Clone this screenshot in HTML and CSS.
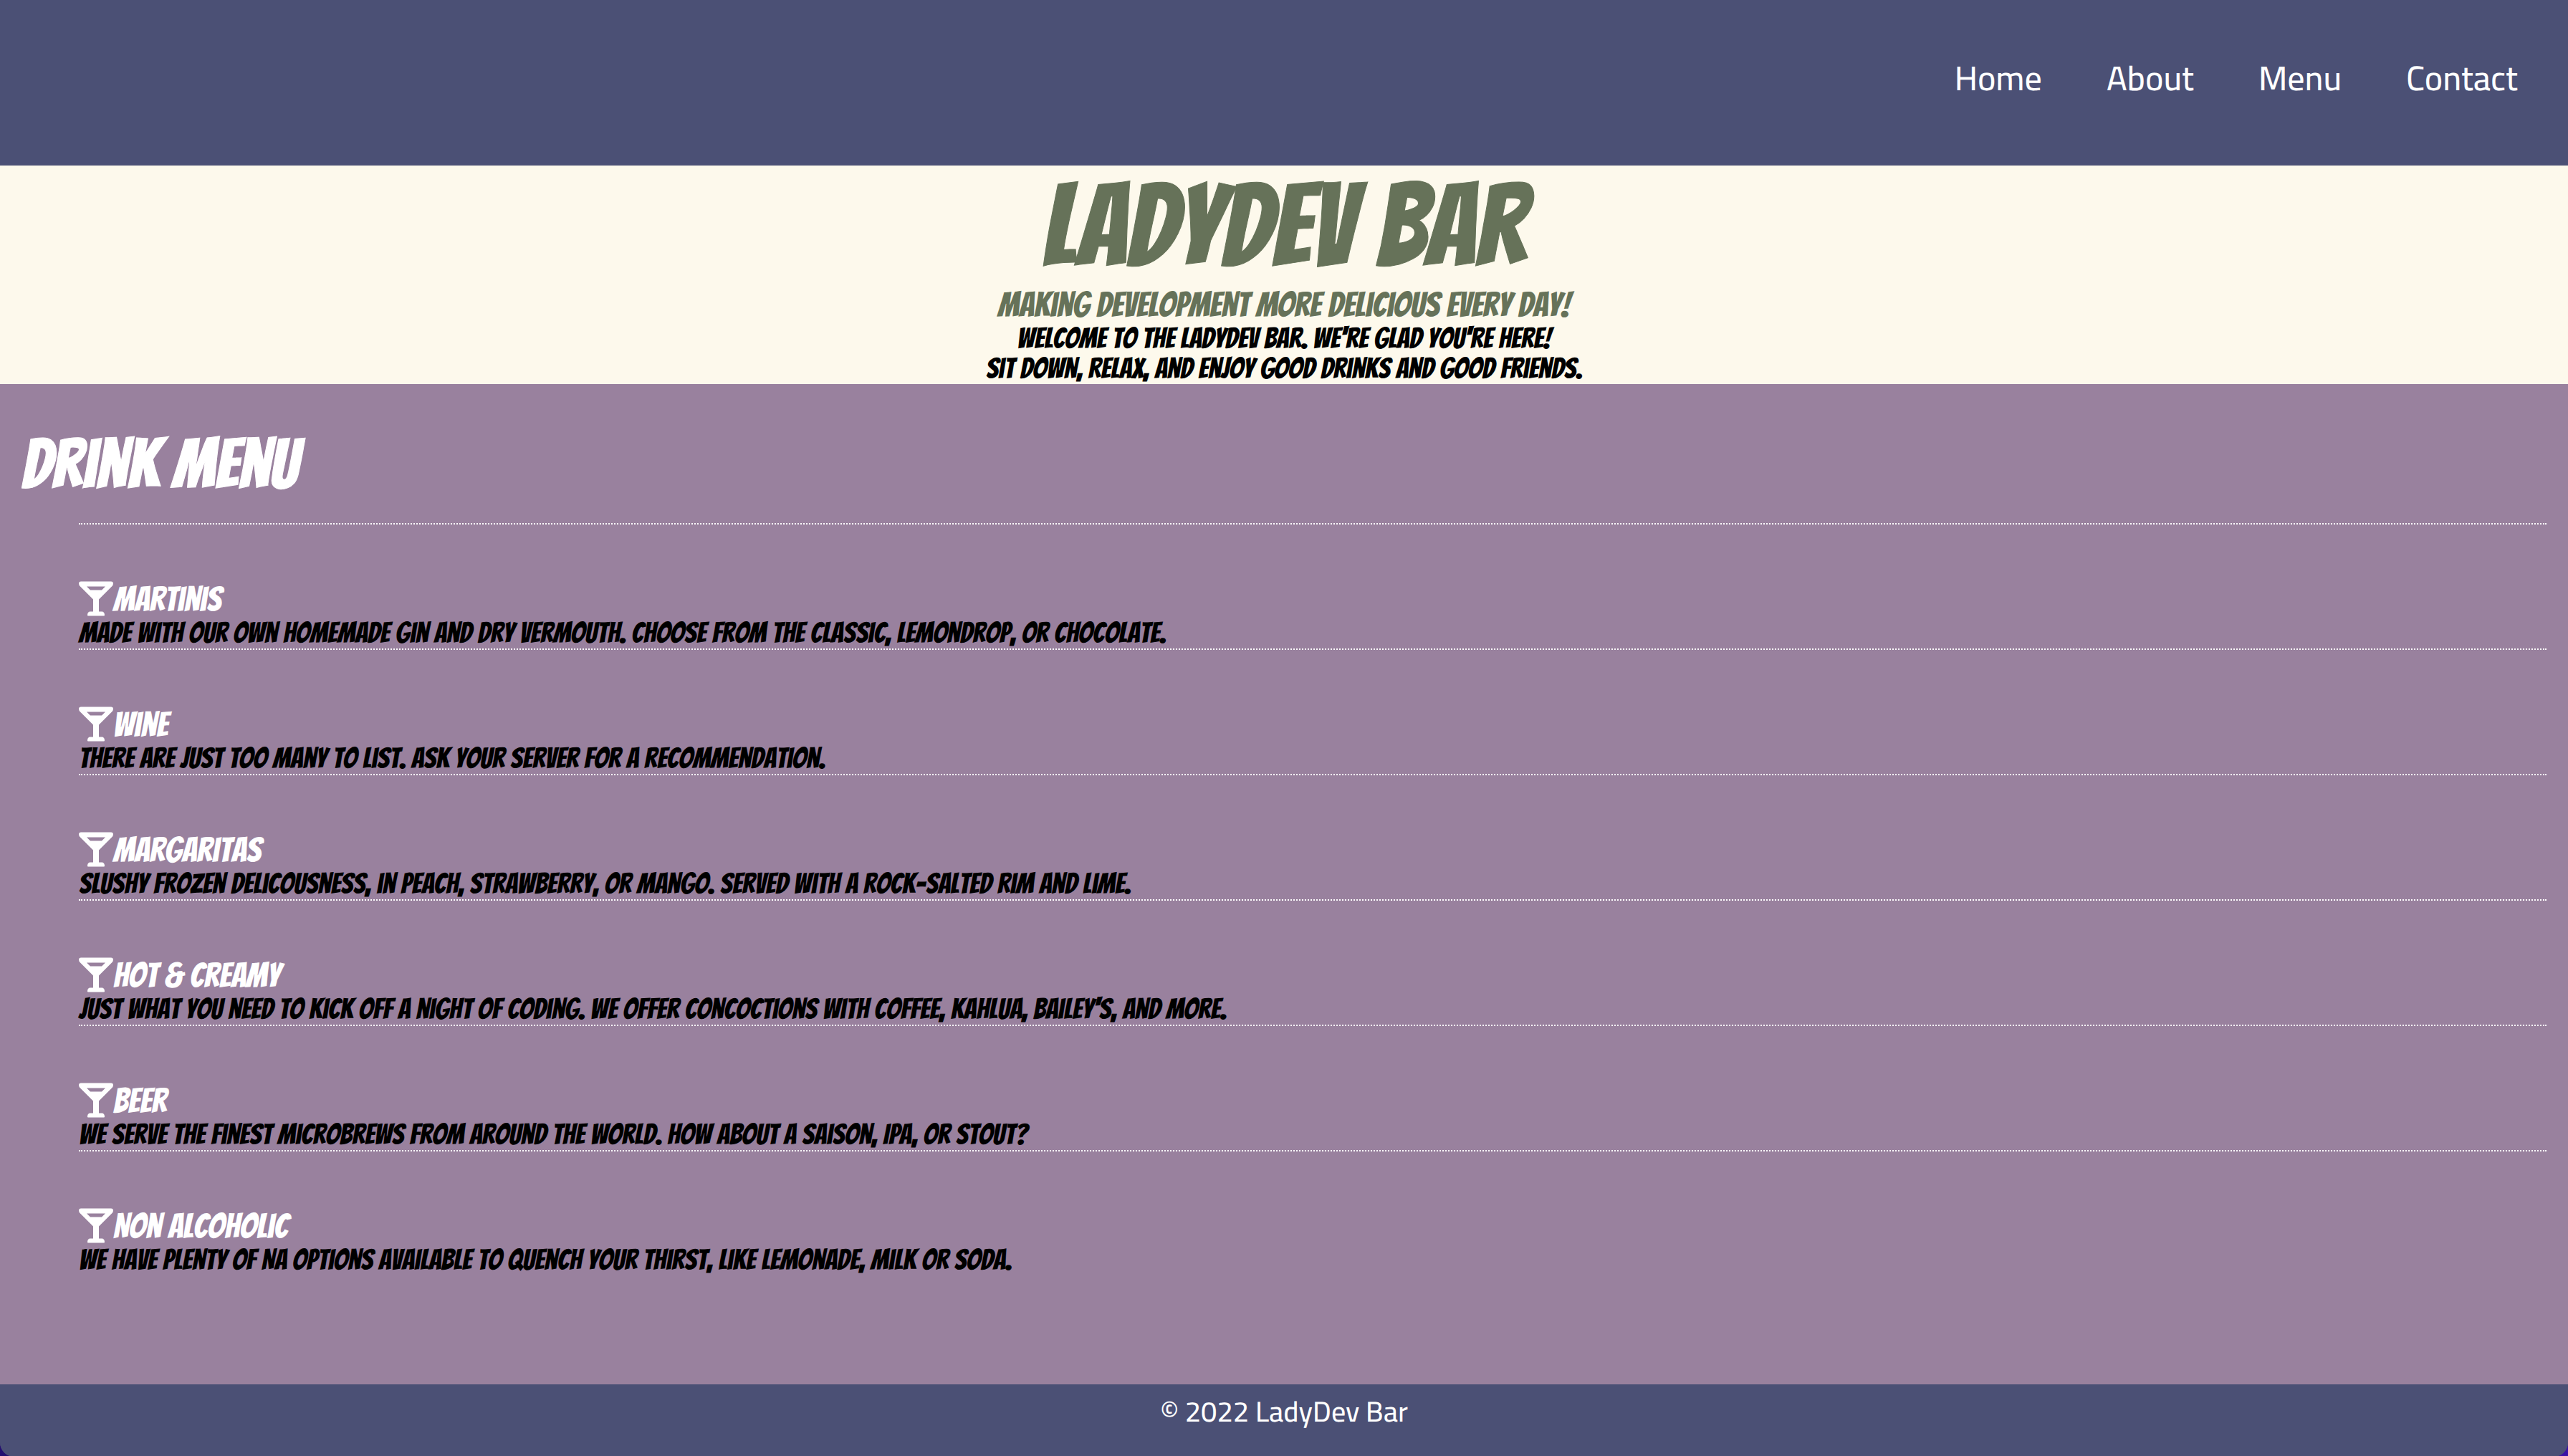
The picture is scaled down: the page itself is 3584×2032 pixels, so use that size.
FILE: index.html
```html
<!DOCTYPE html>
<html lang="en">
<head>
<meta charset="utf-8">
<title>LadyDev Bar</title>
<link rel="stylesheet" href="styles.css">
</head>
<body>
<svg class="sprite" aria-hidden="true">
  <symbol id="glass" viewBox="0 0 48 48">
    <path fill="currentColor" fill-rule="evenodd" d="M3 0H45Q48 0 48 3Q48 5 46 7L28 25V42H33Q36 43 36 47Q36 48 35 48H13Q12 48 12 47Q12 43 15 42H20V25L2 7Q0 5 0 3Q0 0 3 0ZM11 7L16 12H32L37 7Z"/>
  </symbol>
</svg>
<header class="top">
  <nav class="nav">
    <a href="#home">Home</a>
    <a href="#about">About</a>
    <a href="#menu">Menu</a>
    <a href="#contact">Contact</a>
  </nav>
</header>
<section class="hero" id="home">
  <h1 class="hero-title">LadyDev Bar</h1>
  <h2 class="tagline">Making development more delicious every day!</h2>
  <p class="welcome">Welcome to the LadyDev Bar. We're glad you're here!<br>Sit down, relax, and enjoy good drinks and good friends.</p>
</section>
<main class="menu" id="menu">
  <h2 class="menu-title">Drink Menu</h2>
  <ul class="drinks">
    <li class="drink">
      <h3 class="drink-name"><svg class="glass"><use href="#glass"/></svg>Martinis</h3>
      <p class="drink-text">Made with our own homemade gin and dry vermouth. Choose from the classic, lemondrop, or chocolate.</p>
    </li>
    <li class="drink">
      <h3 class="drink-name"><svg class="glass"><use href="#glass"/></svg>Wine</h3>
      <p class="drink-text">There are just too many to list. Ask your server for a recommendation.</p>
    </li>
    <li class="drink">
      <h3 class="drink-name"><svg class="glass"><use href="#glass"/></svg>Margaritas</h3>
      <p class="drink-text">Slushy frozen delicousness, in peach, strawberry, or mango. Served with a rock-salted rim and lime.</p>
    </li>
    <li class="drink">
      <h3 class="drink-name"><svg class="glass"><use href="#glass"/></svg>Hot &amp; Creamy</h3>
      <p class="drink-text">Just what you need to kick off a night of coding. We offer concoctions with coffee, Kahlua, Bailey's, and more.</p>
    </li>
    <li class="drink">
      <h3 class="drink-name"><svg class="glass"><use href="#glass"/></svg>Beer</h3>
      <p class="drink-text">We serve the finest microbrews from around the world. How about a Saison, IPA, or Stout?</p>
    </li>
    <li class="drink">
      <h3 class="drink-name"><svg class="glass"><use href="#glass"/></svg>Non Alcoholic</h3>
      <p class="drink-text">We have plenty of NA options available to quench your thirst, like lemonade, milk or soda.</p>
    </li>
  </ul>
</main>
<footer class="footer" id="contact">© 2022 LadyDev Bar</footer>
</body>
</html>
```
FILE: styles.css
```css
* {
  box-sizing: border-box;
  margin: 0;
  padding: 0;
}

html {
  background: linear-gradient(90deg, #240f70, #3a12a5);
}

body {
  display: flex;
  flex-direction: column;
  min-height: 100vh;
  overflow: hidden;
  border-radius: 0 0 20px 20px;
  background: #4b5075;
  color: #000;
  font: 40px Bangers, "Liberation Sans", sans-serif;
  text-rendering: geometricPrecision;
}

h1,
h2,
h3 {
  font-weight: normal;
}

.sprite {
  display: none;
}

.top {
  background: #4b5075;
  padding: 79px 70px 92px;
}

.nav {
  display: flex;
  justify-content: flex-end;
  gap: 90px;
  font: 500 48px/60px Cairo, "Titillium Web", Roboto, sans-serif;
}

.nav a {
  color: #fff;
  text-decoration: none;
}

.hero {
  background: #fdf9ec;
  text-align: center;
}

.hero-title {
  color: #667259;
  font-size: 160px;
  line-height: 169px;
  -webkit-text-stroke: 1px currentColor;
}

.tagline {
  color: #667259;
  font-size: 48px;
  line-height: 52px;
}

.welcome {
  line-height: 42px;
}

.menu {
  flex: 1;
  background: #99819e;
  padding: 61px 30px 152px;
}

.menu-title {
  color: #fff;
  font-size: 96px;
  line-height: 102px;
  padding-bottom: 31px;
  -webkit-text-stroke: 1px currentColor;
}

.drinks {
  list-style: none;
  padding-left: 80px;
}

.drink {
  border-top: 2px dotted #fff;
  padding-top: 79px;
}

.drink-name {
  display: flex;
  align-items: flex-start;
  color: #fff;
  font-size: 48px;
  line-height: 52px;
}

.glass {
  width: 48px;
  height: 49px;
}

.drink-text {
  line-height: 42px;
}

.footer {
  background: #4b5075;
  border-bottom: 1px solid #62668a;
  color: #fff;
  padding: 12px 0 36px;
  text-align: center;
  font: 500 40px/52px Cairo, "Titillium Web", Roboto, sans-serif;
}
```
